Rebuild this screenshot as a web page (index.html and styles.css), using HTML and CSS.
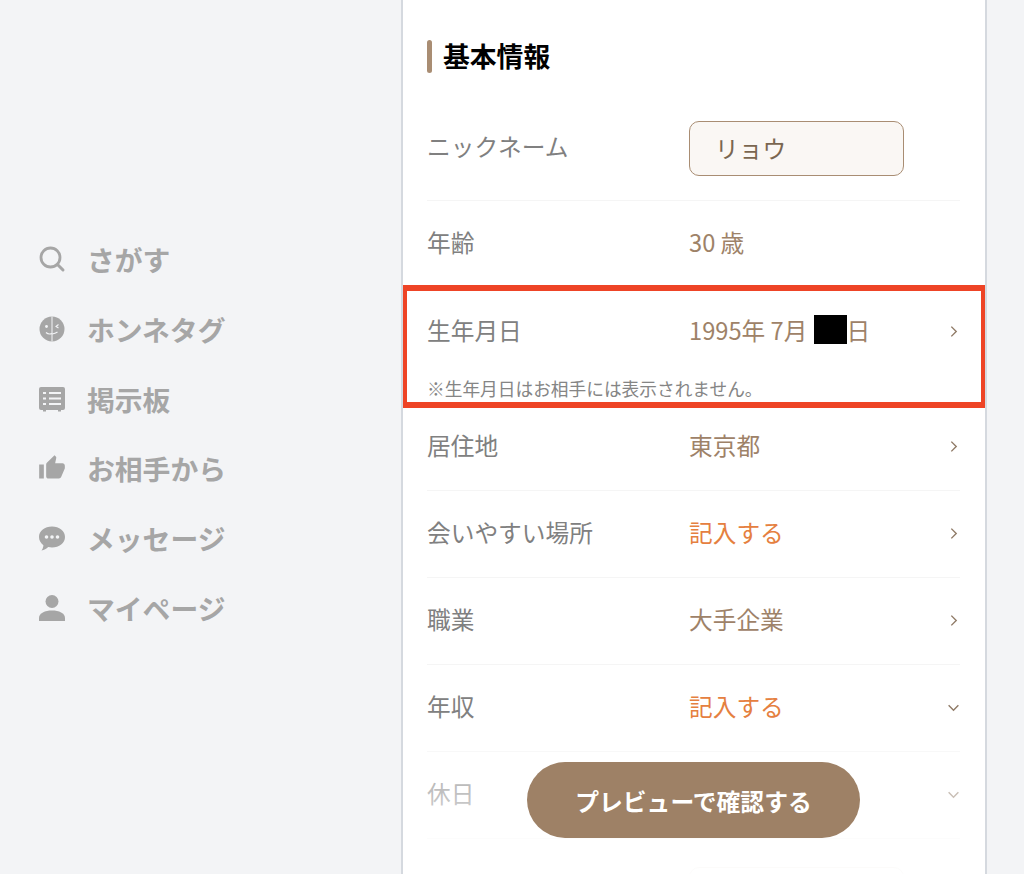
FILE: index.html
```html
<!DOCTYPE html>
<html lang="ja">
<head>
    <meta charset="UTF-8">
    <meta name="viewport" content="width=device-width, initial-scale=1.0">
    <title>基本情報</title>
    <link rel="stylesheet" href="styles.css">
</head>
<body>
    <div class="page">
        <nav class="sidebar">
            <a class="nav-item">
                <svg class="nav-icon" viewBox="0 0 28 28"><circle cx="12.5" cy="12.5" r="9.5" fill="none" stroke="#a6a6a6" stroke-width="2.8"/><path d="M19.5 19.5L25 25" fill="none" stroke="#a6a6a6" stroke-width="3" stroke-linecap="round"/></svg>
                <span>さがす</span>
            </a>
            <a class="nav-item">
                <svg class="nav-icon" viewBox="0 0 28 28"><circle cx="14" cy="14" r="12.5" fill="#a6a6a6"/><path d="M14 1.5V26.500" stroke="#f3f4f6" stroke-width="1"/><circle cx="8.500" cy="11.500" r="1.400" fill="#f3f4f6"/><path d="M20.500 9.500l-2.500 2 2.500 1.500" fill="none" stroke="#f3f4f6" stroke-width="1.100"/><path d="M8 17.500c2 1.800 4 1.800 6 1M14 19c2-.3 4-1 5.500-2" fill="none" stroke="#f3f4f6" stroke-width="1.200"/></svg>
                <span>ホンネタグ</span>
            </a>
            <a class="nav-item">
                <svg class="nav-icon" viewBox="0 0 28 28"><path d="M3 2h22a2 2 0 0 1 2 2v19a2 2 0 0 1-2 2h-2v1.500h-3V25H8v1.500H5V25H3a2 2 0 0 1-2-2V4a2 2 0 0 1 2-2z" fill="#a6a6a6"/><path d="M5 8h3M11 8h12M5 13.500h3M11 13.500h12M5 19h3M11 19h12" stroke="#f3f4f6" stroke-width="2.200"/></svg>
                <span>掲示板</span>
            </a>
            <a class="nav-item">
                <svg class="nav-icon" viewBox="0 0 24 24"><path fill="#a6a6a6" d="M1 21h4V9H1v12zm22-11c0-1.100-.9-2-2-2h-6.310l.95-4.570.03-.32c0-.41-.17-.79-.44-1.060L14.170 1 7.590 7.590C7.220 7.950 7 8.450 7 9v10c0 1.100.9 2 2 2h9c.83 0 1.540-.5 1.840-1.220l3.020-7.050c.09-.23.14-.47.14-.73v-2z"/></svg>
                <span>お相手から</span>
            </a>
            <a class="nav-item">
                <svg class="nav-icon" viewBox="0 0 28 28"><path d="M14 2.500c7.200 0 13 4.600 13 10.500s-5.800 10.500-13 10.500c-1.300 0-2.600-.2-3.800-.4C8.500 25 6 26.300 3.500 26.500c1-1.300 1.800-3.200 1.900-5.300C2.700 19.300 1 16.300 1 13 1 7.100 6.800 2.500 14 2.500z" fill="#a6a6a6"/><circle cx="8.500" cy="13" r="1.800" fill="#f3f4f6"/><circle cx="14" cy="13" r="1.800" fill="#f3f4f6"/><circle cx="19.500" cy="13" r="1.800" fill="#f3f4f6"/></svg>
                <span>メッセージ</span>
            </a>
            <a class="nav-item">
                <svg class="nav-icon" viewBox="0 0 28 28"><circle cx="14" cy="7.500" r="6.500" fill="#a6a6a6"/><path d="M1 27v-3c0-5 6-7.500 13-7.500s13 2.500 13 7.500v3z" fill="#a6a6a6"/></svg>
                <span>マイページ</span>
            </a>
        </nav>

        <main class="panel">
            <h2 class="section-title">基本情報</h2>

            <div class="row row-nick">
                <div class="label">ニックネーム</div>
                <input class="nick-input" type="text" value="リョウ">
            </div>
            <div class="row">
                <div class="label">年齢</div>
                <div class="value">30 歳</div>
            </div>
            <div class="row-group">
                <div class="row row-plain">
                    <div class="label">生年月日</div>
                    <div class="value">1995年 7月<span class="redact"></span>日</div>
                    <svg class="chev" viewBox="0 0 12 12"><path d="M4 1.500L8.500 6 4 10.500"/></svg>
                </div>
                <p class="note">※生年月日はお相手には表示されません。</p>
                <div class="highlight"></div>
            </div>
            <div class="row">
                <div class="label">居住地</div>
                <div class="value">東京都</div>
                <svg class="chev" viewBox="0 0 12 12"><path d="M4 1.500L8.500 6 4 10.500"/></svg>
            </div>
            <div class="row">
                <div class="label">会いやすい場所</div>
                <div class="value value-empty">記入する</div>
                <svg class="chev" viewBox="0 0 12 12"><path d="M4 1.500L8.500 6 4 10.500"/></svg>
            </div>
            <div class="row">
                <div class="label">職業</div>
                <div class="value">大手企業</div>
                <svg class="chev" viewBox="0 0 12 12"><path d="M4 1.500L8.500 6 4 10.500"/></svg>
            </div>
            <div class="row">
                <div class="label">年収</div>
                <div class="value value-empty">記入する</div>
                <svg class="chev" viewBox="0 0 12 12"><path d="M1.500 4L6 8.500 10.500 4"/></svg>
            </div>
            <div class="row">
                <div class="label">休日</div>
                <div class="value"></div>
                <svg class="chev" viewBox="0 0 12 12"><path d="M1.500 4L6 8.500 10.500 4"/></svg>
            </div>
            <div class="next-box"></div>

            <div class="fade"></div>
            <button class="preview-btn">プレビューで確認する</button>
        </main>
    </div>
</body>
</html>
```

FILE: styles.css
```css
* {
    box-sizing: border-box;
}

body {
    margin: 0;
    background-color: #f3f4f6;
    font-family: "Noto Sans CJK JP", "Noto Sans", sans-serif;
}

.page {
    display: flex;
    height: 100vh;
    overflow: hidden;
}

.sidebar {
    width: 401px;
    flex-shrink: 0;
    display: flex;
    flex-direction: column;
    justify-content: center;
    padding: 0 0 7px 38px;
}

.nav-item {
    display: flex;
    align-items: center;
    gap: 21px;
    height: 69.7px;
    color: #a6a6a6;
    font-size: 27.8px;
    font-weight: 700;
}

.nav-icon {
    width: 28px;
    height: 28px;
    flex-shrink: 0;
}

.panel {
    position: relative;
    width: 586px;
    height: 874px;
    padding: 40px 25px 0 24px;
    background-color: #fff;
    border-left: 2px solid #d5d9df;
    border-right: 2px solid #d5d9df;
    overflow: hidden;
}

.section-title {
    display: flex;
    align-items: flex-start;
    gap: 11px;
    margin: 0;
    height: 33px;
    color: #000;
    font-size: 26.800px;
    font-weight: 700;
    line-height: 31px;
}

.section-title::before {
    content: "";
    flex-shrink: 0;
    width: 5px;
    height: 33px;
    border-radius: 3px;
    background-color: #a98d73;
}

.row,
.row-group {
    display: flex;
    align-items: center;
    height: 87px;
    border-bottom: 1px solid #f5f5f5;
}

.row-nick {
    height: 128px;
    padding-top: 23px;
}

.row-group {
    position: relative;
    display: block;
    height: 116px;
}

.row-plain {
    border-bottom: none;
}

.label {
    width: 262px;
    flex-shrink: 0;
    padding-bottom: 4px;
    color: #808080;
    font-size: 23.700px;
}

.value {
    flex: 1;
    display: flex;
    align-items: center;
    padding-bottom: 4px;
    color: #9e8268;
    font-size: 23.700px;
}

.value-empty {
    color: #e58040;
}

.redact {
    width: 33px;
    height: 29px;
    margin: 0 -1px 0 7px;
    background-color: #000;
}

.nick-input {
    width: 215px;
    height: 55px;
    padding: 0 25px;
    background-color: #faf7f4;
    border: 1px solid #a98d73;
    border-radius: 10px;
    color: #7a6650;
    font-family: inherit;
    font-size: 23.700px;
}

.chev {
    width: 13px;
    height: 13px;
    flex-shrink: 0;
    margin-bottom: 1px;
    fill: none;
    stroke: #8f7a66;
    stroke-width: 1.300;
}

.note {
    margin: 0;
    color: #858585;
    font-size: 17.700px;
    line-height: 26px;
}

.highlight {
    position: absolute;
    top: -3px;
    bottom: -5px;
    left: -26px;
    right: -27px;
    border: 6px solid #ee4426;
}

.next-box {
    width: 215px;
    height: 50px;
    margin: 28px 0 0 262px;
    border: 1px solid #e8e2dc;
    border-radius: 10px;
}

.fade {
    position: absolute;
    left: 0;
    right: 0;
    bottom: 0;
    height: 124px;
    background: linear-gradient(rgba(255, 255, 255, 0.3), rgba(255, 255, 255, 0.9));
}

.preview-btn {
    position: absolute;
    left: 124px;
    top: 762px;
    width: 333px;
    height: 76px;
    border: none;
    border-radius: 38px;
    background-color: #9e8166;
    color: #fff;
    font-family: inherit;
    font-size: 23.800px;
    font-weight: 700;
}
```
